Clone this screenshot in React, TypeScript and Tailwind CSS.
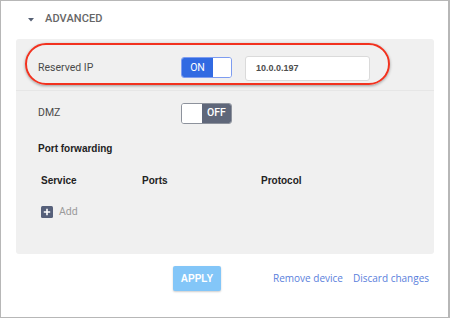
import React from "react";

const Toggle: React.FC<{ on: boolean }> = ({ on }) => {
  if (on) {
    return (
      <div className="flex w-[51px] h-[21px] rounded-[3px] border border-[#7d9cf0] overflow-hidden bg-white">
        <div className="w-[31px] h-full bg-[#316ae2] flex items-center justify-center text-white text-[10.5px]">
          ON
        </div>
        <div className="flex-1 bg-white" />
      </div>
    );
  }
  return (
    <div className="flex w-[51px] h-[21px] rounded-[3px] border border-[#8d929c] overflow-hidden bg-white">
      <div className="w-[20px] h-full bg-white" />
      <div className="flex-1 h-full bg-[#5f677a] flex items-center justify-center text-white text-[10.5px] font-medium">
        OFF
      </div>
    </div>
  );
};

const App: React.FC = () => {
  return (
    <div
      className="relative w-[450px] h-[318px] bg-white border border-r-2 border-[#b7b7b7]"
      style={{ fontFamily: "Roboto, 'Liberation Sans', sans-serif" }}
    >
      {/* Section header */}
      <div className="h-[37px] flex items-center pl-[27px] gap-[11px]">
        <svg width="6" height="4" viewBox="0 0 6 4">
          <path d="M0 0 L6 0 L3 3.5 Z" fill="#566074" />
        </svg>
        <span className="text-[11px] font-medium text-[#666] tracking-[0.01em]">ADVANCED</span>
      </div>

      {/* Settings panel */}
      <div className="ml-[15px] w-[418px] bg-[#f0f0f0] rounded-[3px] pb-[28px] mt-[1px]">
        <div className="h-[51px] flex items-center pl-[22px] pt-[6px]">
          <span className="w-[143px] text-[10.5px] text-[#4a4a4a]">Reserved IP</span>
          <Toggle on />
          <div className="ml-[13px] mt-[2px] w-[125px] h-[25px] bg-white border border-[#dadada] rounded-[3px] flex items-center pl-[10px]">
            <span
              className="text-[9px] font-bold text-[#4d4d4d]"
              style={{ fontFamily: "'Liberation Sans', Arial, sans-serif" }}
            >
              10.0.0.197
            </span>
          </div>
        </div>
        <div className="h-px bg-[#fbfbfb] border-t border-[#e6e6e6]" />

        <div className="h-[43px] flex items-center pl-[22px] pt-px">
          <span className="w-[143px] text-[10.5px] text-[#4a4a4a]">DMZ</span>
          <Toggle on={false} />
        </div>

        <div
          className="h-[28px] flex items-center pl-[22px] pt-px text-[10px] font-bold text-[#222]"
          style={{ fontFamily: "'Liberation Sans', Arial, sans-serif" }}
        >
          Port forwarding
        </div>

        <div
          className="h-[36px] flex items-center pl-[25px] text-[10px] font-bold text-[#222]"
          style={{ fontFamily: "'Liberation Sans', Arial, sans-serif" }}
        >
          <span className="w-[101px]">Service</span>
          <span className="w-[119px]">Ports</span>
          <span>Protocol</span>
        </div>

        <div className="h-[28px] flex items-center pl-[25px] gap-[6px]">
          <svg width="12" height="12" viewBox="0 0 12 12">
            <rect x="0" y="0" width="12" height="12" rx="1.5" fill="#56607a" />
            <path d="M6 2.8 V9.2 M2.8 6 H9.2" stroke="#fff" strokeWidth="1.6" />
          </svg>
          <span className="text-[10.5px] text-[#9a9a9a]">Add</span>
        </div>
      </div>

      {/* Actions */}
      <div className="flex items-center mt-[12px] pl-[172px]">
        <button
          className="w-[48px] h-[25px] rounded-[2px] bg-[#83c6f8] text-white text-[10px] font-bold shadow-[0_1px_2px_rgba(0,0,0,0.2)]"
          style={{ fontFamily: "'Liberation Sans', Arial, sans-serif" }}
        >
          APPLY
        </button>
        <div
          className="ml-[52px] flex items-center gap-[10px] text-[10px] text-[#5a80dc]"
          style={{ fontFamily: "'Open Sans', sans-serif" }}
        >
          <span>Remove device</span>
          <span>Discard changes</span>
        </div>
      </div>

      {/* Highlight annotation */}
      <div className="absolute left-[24px] top-[42px] w-[365px] h-[42px] rounded-full border-2 border-[#f2321f] shadow-[0_1px_3px_rgba(0,0,0,0.35)] pointer-events-none" />
    </div>
  );
};

export default App;
